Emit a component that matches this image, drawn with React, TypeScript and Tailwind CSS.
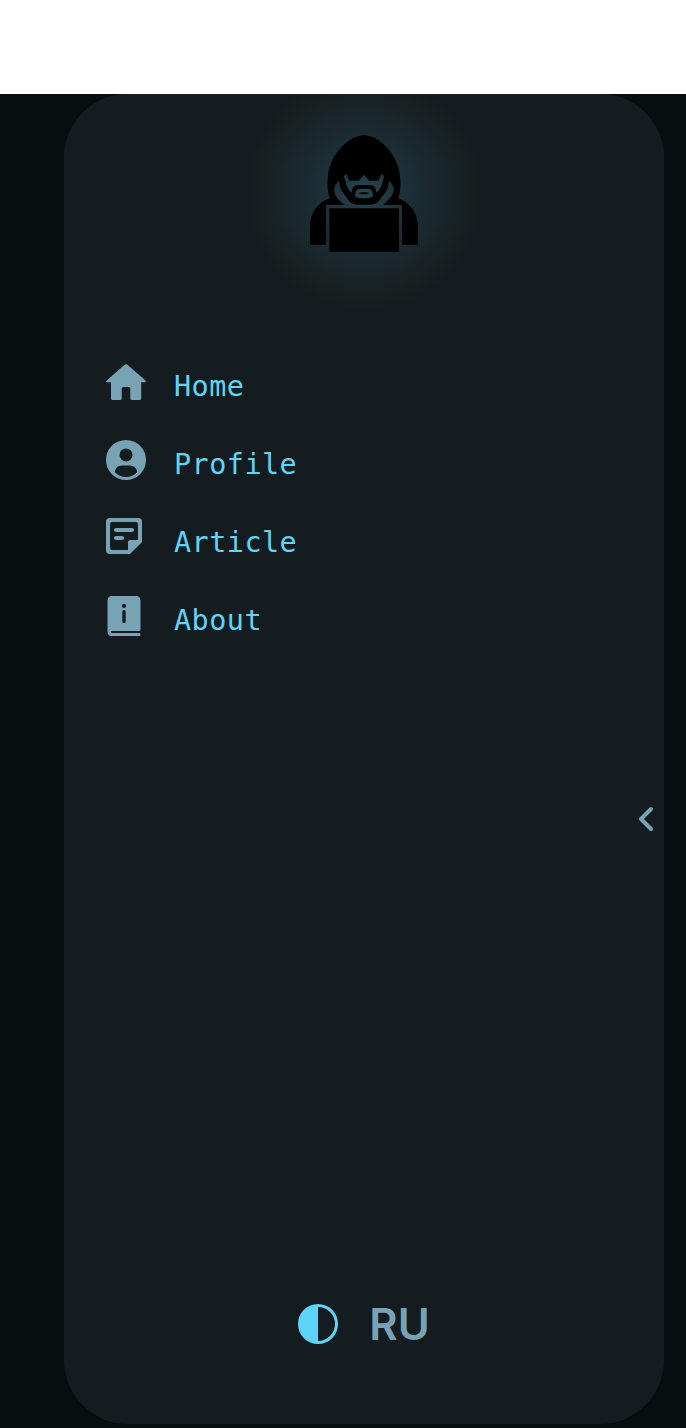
const Hacker = () => (
  <svg className="h-[135px] w-[130px]" viewBox="0 0 390 405" fill="#000" fillRule="evenodd" aria-hidden="true">
    <path d="M192 31C146 31 84 92 83 165C82 188 83 205 90 219C54 232 30 262 30 305V360H78V240H135C112 224 99 205 103 188C106 179 110 172 117 167C119 187 123 197 132 208C143 220 149 239 170 239H214C235 239 241 220 252 208C261 197 265 187 267 167C274 172 279 180 281 190C283 205 270 224 249 240H306V360H354V305C354 262 328 232 294 219C301 205 302 188 301 165C300 92 238 31 192 31ZM140 148C135 149 132 152 132 157C136 165 137 175 140 182C144 191 149 199 155 203C157 183 164 180 176 180H208C220 180 227 183 229 203C236 197 242 190 244 182C248 174 249 165 252 157C252 152 249 149 244 147C241 154 240 160 234 167H208L192 149L176 167H150C143 163 145 155 140 148ZM177 192C169 192 166 202 165 212C168 218 180 220 192 220C205 220 217 218 219 212C218 202 215 192 207 192ZM175 204C184 201 200 201 209 204C201 209 183 209 175 204Z" />
    <path d="M88 250H297V381H88Z" />
  </svg>
);

const HomeIcon = () => (
  <svg className="block size-10" viewBox="0 0 40 40" fill="currentColor" aria-hidden="true">
    <path d="M18.3 2.1Q20 .3 21.7 2.1L39.5 17.4Q40.5 18.8 39 19.2H35.2V35.5Q35.2 37 33.7 37H25.8Q24.3 37 24.3 35.5V25.7Q24.3 24 22.7 24H17.5Q15.7 24 15.7 25.7V35.5Q15.7 37 14.2 37H6.5Q5 37 5 35.5V19.2H1Q-.5 18.7.7 17.4Z" transform="translate(0 1)" />
  </svg>
);

const ProfileIcon = () => (
  <svg className="block size-10" viewBox="0 0 40 40" fill="currentColor" fillRule="evenodd" aria-hidden="true">
    <path d="M20 0A20 20 0 1 1 20 40A20 20 0 0 1 20 0ZM20 8.4A6.5 6.5 0 1 0 20 21.4A6.5 6.5 0 0 0 20 8.4ZM16 25.5C12 25.5 9.3 28.3 8.8 32C11.8 35.3 15.6 37 20 37C24.4 37 28.2 35.3 31.3 32C30.7 28.3 27.5 25.5 24 25.5Z" />
  </svg>
);

const ArticleIcon = () => (
  <svg className="block size-10" viewBox="0 0 40 40" fill="currentColor" fillRule="evenodd" aria-hidden="true">
    <path d="M4 0H32Q36 0 36 4V24L24 36H4Q0 36 0 32V4Q0 0 4 0ZM6 4Q4 4 4 6V30Q4 32 6 32H22V24Q22 22 24 22H32V6Q32 4 30 4Z" />
    <rect x="8" y="10" width="20" height="4" rx="2" />
    <rect x="8" y="18" width="10" height="4" rx="2" />
  </svg>
);

const AboutIcon = () => (
  <svg className="block size-10" viewBox="0 0 40 40" fill="currentColor" fillRule="evenodd" aria-hidden="true">
    <path d="M6 0H30Q34.5 0 34.5 4.5V33.5Q34.5 35 33 35H5V36Q5 37 6 37H33.2Q34.5 37 34.5 38.5Q34.5 40 33.2 40H6Q1.5 40 1.5 35.5V4.5Q1.5 0 6 0ZM18 7.8A2.1 2.1 0 1 0 18 12A2.1 2.1 0 0 0 18 7.8ZM16.3 15.5V25.5Q16.3 27 18 27Q19.7 27 19.7 25.5V15.5Q19.7 14 18 14Q16.3 14 16.3 15.5Z" />
  </svg>
);

const items = [
  { label: "Home", Icon: HomeIcon },
  { label: "Profile", Icon: ProfileIcon },
  { label: "Article", Icon: ArticleIcon },
  { label: "About", Icon: AboutIcon },
];

export default function App() {
  return (
    <div className="h-[1428px] overflow-hidden bg-white pt-[94px]">
      <div className="h-[1334px] bg-[#080d0f] pr-[22px] pl-16">
        <aside className="flex h-[1330px] flex-col overflow-hidden rounded-[64px] bg-[#151c1f] text-[#78a3b4]">
          <header className="flex h-[216px] items-start justify-center bg-[radial-gradient(circle_at_300px_98px,#294653_0px,#1e3139_35px,#1b2a31_62px,#192428_85px,#181f20_105px,#151c1f_118px)] pt-[31px] pl-[2px]">
            <Hacker />
          </header>
          <nav className="mt-[52px] flex flex-col gap-[38px] pl-[42px]">
            {items.map(({ label, Icon }) => (
              <a key={label} href="#" className="flex h-10 items-center gap-7">
                <Icon />
                <span className="pt-2.5 font-['DejaVu_Sans_Mono',monospace] text-[28.5px] leading-10 tracking-[0.44px] text-[#5ed5f8]">{label}</span>
              </a>
            ))}
          </nav>
          <button type="button" aria-label="Collapse" className="mt-[170px] mr-[10px] self-end">
            <svg className="block h-[26px] w-4" viewBox="0 0 16 26" fill="none" stroke="currentColor" strokeWidth="4" strokeLinecap="round" strokeLinejoin="round">
              <path d="M13 3L3 13L13 23" />
            </svg>
          </button>
          <footer className="mt-auto mb-[70px] flex h-[60px] items-center justify-center gap-[31px]">
            <button type="button" aria-label="Theme" className="text-[#5ed5f8]">
              <svg className="block size-10" viewBox="0 0 40 40" fill="currentColor" fillRule="evenodd">
                <path d="M20 0A20 20 0 1 1 20 40A20 20 0 0 1 20 0ZM20 3V37A17 17 0 0 0 20 3Z" />
              </svg>
            </button>
            <button type="button" className="font-['Inter',sans-serif] text-[43.5px] leading-[60px] font-semibold">RU</button>
          </footer>
        </aside>
      </div>
    </div>
  );
}
